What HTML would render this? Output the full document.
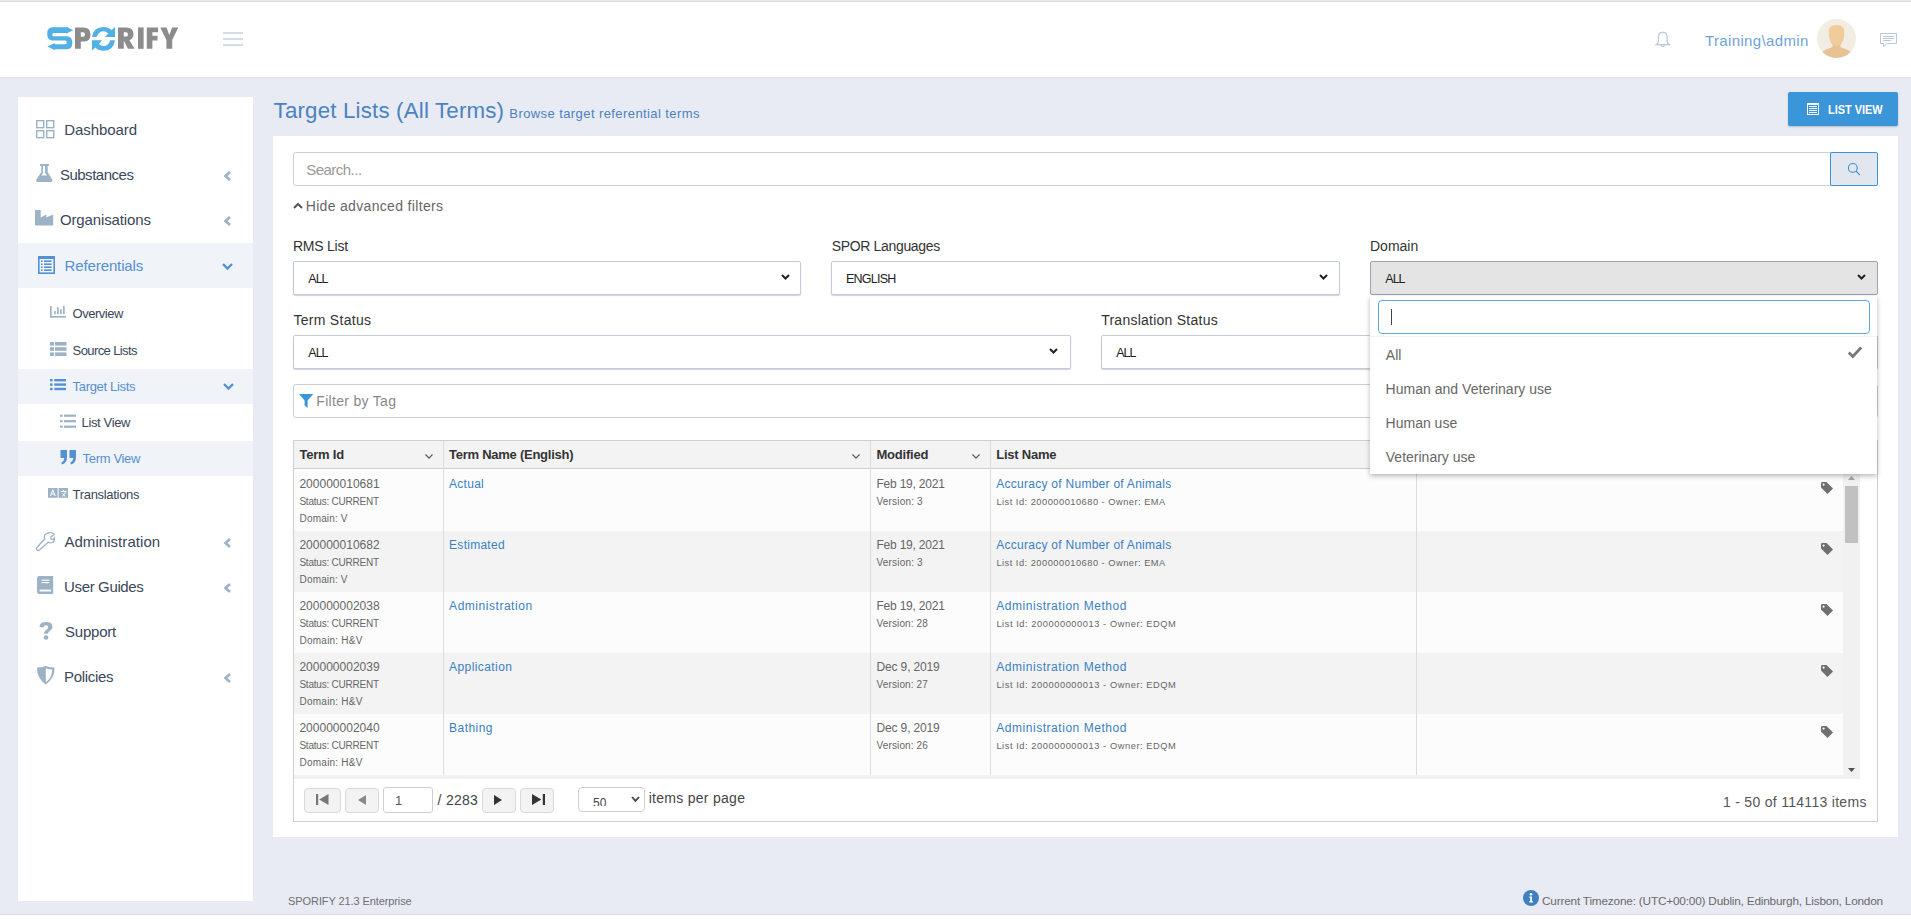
<!DOCTYPE html>
<html><head><meta charset="utf-8">
<style>
*{box-sizing:border-box;margin:0;padding:0}
html,body{width:1911px;height:919px;overflow:hidden}
body{position:relative;background:#e8ebf4;font-family:"Liberation Sans",sans-serif;color:#333}
.a{position:absolute}
.t{position:absolute;line-height:1;white-space:nowrap}
svg{position:absolute;overflow:visible}
.hl{position:absolute;left:18px;width:235px;background:#f0f3f8}
.inp{position:absolute;background:#fff;border:1px solid #cfcfcf;border-radius:3px}
.sel{position:absolute;background:#fff;border:1px solid #c2cbda;border-radius:2px;box-shadow:0 1px 1px rgba(120,130,150,.35)}
</style></head><body>
<div class="a" style="left:0;top:1px;width:1911px;height:1px;background:#d9dadc"></div>
<div class="a" style="left:0;top:2px;width:1911px;height:75px;background:#fff"></div>
<div class="a" style="left:0;top:77px;width:1911px;height:1px;background:#e0e3ec"></div>
<div class="a" style="left:0;top:78px;width:1911px;height:1px;background:#e5e8f1"></div>
<div class="a" style="left:0;top:914px;width:1911px;height:1px;background:#dcdde1"></div>
<div class="a" style="left:0;top:915px;width:1911px;height:4px;background:#fff"></div>
<!-- Logo -->
<svg style="left:0;top:0" width="250" height="77" viewBox="0 0 250 77">
  <g fill="#52b0e4">
    <path d="M52.5 27.3 H66.2 V26.5 L73.1 30.2 L66.2 33.8 V33 H54 Q52.3 33 52.3 34.65 Q52.3 36.3 54 36.3 H67 Q72.3 36.3 72.3 42.8 Q72.3 49.3 67 49.3 H54.8 V50.3 L47.4 46.6 L54.8 43 V44.2 H65.2 Q66.8 44.2 66.8 42.3 Q66.8 40.4 65.2 40.4 H52.5 Q47.2 40.4 47.2 33.85 Q47.2 27.3 52.5 27.3 Z"/>
    <path d="M92 36.9 Q93.5 26.9 103.5 26.9 Q108.5 26.9 111.6 30 L115 26.9 V36.9 H105 L108.2 33.4 Q106 31.2 103.5 31.2 Q98.8 31.2 96.6 36.9 Z"/>
    <path d="M115 40.2 Q113.5 50.8 103.5 50.8 Q98.5 50.8 95.4 47.6 L92 50.6 V40.2 H102.1 L98.9 44 Q101 46.1 103.5 46.1 Q108.2 46.1 110.3 40.2 Z"/>
  </g>
  <g fill="#8c8c8c">
    <path d="M75 27.4 H83.5 Q90.5 27.4 90.5 34.5 Q90.5 41.6 83.5 41.6 H80.8 V48.8 H75 Z M80.8 32.3 V36.8 H83 Q85 36.8 85 34.5 Q85 32.3 83 32.3 Z"/>
    <path d="M118 27.4 H126.5 Q133.5 27.4 133.5 34 Q133.5 38.6 129.5 40.2 L134.5 48.8 H128 L124 41 H123.8 V48.8 H118 Z M123.8 32.2 V36.6 H126 Q128 36.6 128 34.4 Q128 32.2 126 32.2 Z"/>
    <rect x="138" y="27.4" width="5.6" height="21.4"/>
    <path d="M146.8 27.4 H158 V32.3 H152.4 V35.8 H157.5 V40.5 H152.4 V48.8 H146.8 Z"/>
    <path d="M160.3 27.4 H166.5 L169.3 35 L172.1 27.4 H178.3 L172.2 40 V48.8 H166.4 V40 Z"/>
  </g>
  <g fill="#d3dce8">
    <rect x="223" y="32" width="20" height="2"/>
    <rect x="223" y="38" width="20" height="2"/>
    <rect x="223" y="44" width="20" height="2"/>
  </g>
</svg>

<!-- Header right -->
<svg style="left:1650px;top:26px" width="26" height="26" viewBox="0 0 26 26">
  <path d="M12.75 6.3 Q8.4 6.3 8.4 11 V15.3 Q8.4 17 6.2 18.6 H19.3 Q17.1 17 17.1 15.3 V11 Q17.1 6.3 12.75 6.3 Z" fill="none" stroke="#b7c9de" stroke-width="1.3"/>
  <path d="M10.9 19 Q12.75 22.3 14.6 19" fill="none" stroke="#b7c9de" stroke-width="1.2"/>
</svg>
<svg style="left:1817px;top:19px" width="39" height="39" viewBox="0 0 39 39">
  <defs><clipPath id="av"><circle cx="19.5" cy="19.5" r="19.5"/></clipPath></defs>
  <circle cx="19.5" cy="19.5" r="19.5" fill="#f3ece3"/>
  <g clip-path="url(#av)">
    <path d="M19.5 6 Q13 6 11.8 11 Q11.3 17 13 22 Q15.3 27 19.5 28 Q23.7 27 26 22 Q27.7 17 27.2 11 Q26 6 19.5 6 Z" fill="#f0cc9c"/>
    <path d="M15.5 25 V28 Q9 30 4 34 V40 H35 V34 Q30 30 23.5 28 V25 Q19.5 29 15.5 25 Z" fill="#e7c394"/>
  </g>
</svg>
<svg style="left:1880px;top:33px" width="17" height="15" viewBox="0 0 17 15">
  <path d="M0.5 0.5 H16.5 V10.5 H6.8 L3.6 13.8 V10.5 H0.5 Z" fill="none" stroke="#b7c9de" stroke-width="1"/>
  <path d="M3 3.5 H14 M3 5.5 H14 M3 7.5 H11" stroke="#b7c9de" stroke-width="1"/>
</svg>

<div class="a" style="left:18px;top:97px;width:235px;height:804px;background:#fff"></div>
<div class="hl" style="top:243px;height:45px"></div>
<div class="hl" style="top:369px;height:35px"></div>
<div class="hl" style="top:441px;height:35px"></div>
<!-- Sidebar icons -->
<svg style="left:36px;top:120px" width="19" height="19" viewBox="0 0 19 19"><g fill="none" stroke="#9cb2c6" stroke-width="1.4"><rect x="0.7" y="0.7" width="7" height="7"/><rect x="10.7" y="0.7" width="7" height="7"/><rect x="0.7" y="10.7" width="7" height="7"/><rect x="10.7" y="10.7" width="7" height="7"/></g></svg>
<svg style="left:36px;top:164px" width="17" height="18" viewBox="0 0 17 18"><path fill-rule="evenodd" d="M4.1 0 H12.9 V2 H11.7 V8.3 L16.2 15.6 Q17 18 14.8 18 H1.7 Q-0.5 18 0.3 15.6 L5.3 8.3 V2 H4.1 Z M7 2 V8.9 L5.4 11.4 H11.1 L9.1 8.9 V2 Z" fill="#9cb2c6"/></svg>
<svg style="left:35.3px;top:210.3px" width="19" height="16" viewBox="0 0 19 16"><path d="M0 0 H5.7 V7.4 L11.4 4.6 V7.4 L18.2 4.6 V15.5 H0 Z" fill="#9cb2c6"/></svg>
<svg style="left:38px;top:256px" width="17" height="18" viewBox="0 0 17 18"><g fill="#5590d2"><rect x="0" y="0" width="17" height="3"/><rect x="0" y="0" width="1.6" height="18"/><rect x="15.4" y="0" width="1.6" height="18"/><rect x="0" y="16.4" width="17" height="1.6"/><rect x="3" y="4.4" width="1.6" height="1.6"/><rect x="6" y="4.4" width="7.6" height="1.6"/><rect x="3" y="7.4" width="1.6" height="1.6"/><rect x="6" y="7.4" width="7.6" height="1.6"/><rect x="3" y="10.4" width="1.6" height="1.6"/><rect x="6" y="10.4" width="7.6" height="1.6"/><rect x="3" y="13.4" width="1.6" height="1.6"/><rect x="6" y="13.4" width="7.6" height="1.6"/></g></svg>
<svg style="left:223px;top:171px" width="9" height="10" viewBox="0 0 9 10"><path d="M7 1 L2.5 5 L7 9" fill="none" stroke="#9cb2c6" stroke-width="2.6"/></svg>
<svg style="left:223px;top:216px" width="9" height="10" viewBox="0 0 9 10"><path d="M7 1 L2.5 5 L7 9" fill="none" stroke="#9cb2c6" stroke-width="2.6"/></svg>
<svg style="left:223px;top:538px" width="9" height="10" viewBox="0 0 9 10"><path d="M7 1 L2.5 5 L7 9" fill="none" stroke="#9cb2c6" stroke-width="2.6"/></svg>
<svg style="left:223px;top:583px" width="9" height="10" viewBox="0 0 9 10"><path d="M7 1 L2.5 5 L7 9" fill="none" stroke="#9cb2c6" stroke-width="2.6"/></svg>
<svg style="left:223px;top:673px" width="9" height="10" viewBox="0 0 9 10"><path d="M7 1 L2.5 5 L7 9" fill="none" stroke="#9cb2c6" stroke-width="2.6"/></svg>
<svg style="left:221.5px;top:263px" width="11" height="7" viewBox="0 0 11 7"><path d="M1 1 L5.5 5.5 L10 1" fill="none" stroke="#5590d2" stroke-width="2.4"/></svg>
<svg style="left:222.5px;top:383px" width="11" height="7" viewBox="0 0 11 7"><path d="M1 1 L5.5 5.5 L10 1" fill="none" stroke="#5590d2" stroke-width="2.4"/></svg>
<svg style="left:50px;top:306px" width="17" height="12" viewBox="0 0 17 12"><g fill="#9cb2c6"><rect x="0" y="0" width="1.7" height="11.6"/><rect x="0" y="10" width="16" height="1.6"/><rect x="4" y="5" width="1.7" height="3.2"/><rect x="7" y="1.3" width="1.7" height="6.9"/><rect x="10" y="3.2" width="1.7" height="5"/><rect x="13" y="0" width="1.7" height="8.2"/></g></svg>
<svg style="left:49.5px;top:342px" width="17" height="15" viewBox="0 0 17 15"><g fill="#9cb2c6"><rect x="0" y="0" width="4" height="3.6"/><rect x="5" y="0" width="11.5" height="3.6"/><rect x="0" y="5.2" width="4" height="3.6"/><rect x="5" y="5.2" width="11.5" height="3.6"/><rect x="0" y="10.4" width="4" height="3.6"/><rect x="5" y="10.4" width="11.5" height="3.6"/></g></svg>
<svg style="left:50px;top:379px" width="17" height="12" viewBox="0 0 17 12"><g fill="#5590d2"><rect x="0" y="0" width="2.6" height="2.4"/><rect x="4.3" y="0" width="11.7" height="2.4"/><rect x="0" y="4.4" width="2.6" height="2.4"/><rect x="4.3" y="4.4" width="11.7" height="2.4"/><rect x="0" y="8.8" width="2.6" height="2.4"/><rect x="4.3" y="8.8" width="11.7" height="2.4"/></g></svg>
<svg style="left:60px;top:414px" width="17" height="15" viewBox="0 0 17 15"><g fill="#9cb2c6"><rect x="0" y="0.6" width="2.6" height="2.2"/><rect x="4" y="0.6" width="12" height="2.2"/><rect x="0" y="6.1" width="2.6" height="2.2"/><rect x="4" y="6.1" width="12" height="2.2"/><rect x="0" y="11.6" width="2.6" height="2.2"/><rect x="4" y="11.6" width="12" height="2.2"/></g></svg>
<svg style="left:60px;top:450px" width="17" height="15" viewBox="0 0 17 15"><g fill="#5590d2"><path d="M0.5 0 H7 V7 Q7 13 2 14.5 L1.2 12.5 Q4 11.5 4.2 8 H0.5 Z"/><path d="M9.5 0 H16 V7 Q16 13 11 14.5 L10.2 12.5 Q13 11.5 13.2 8 H9.5 Z"/></g></svg>
<svg style="left:48px;top:488px" width="21" height="11" viewBox="0 0 21 11"><rect x="0" y="0" width="9.6" height="9.8" fill="#9cb2c6"/><rect x="10.6" y="0" width="9.4" height="9.8" fill="#9cb2c6"/><path d="M2.4 8 L4.8 1.8 L7.2 8 M3.4 6 H6.2" fill="none" stroke="#fff" stroke-width="1"/><path d="M12.6 3.4 H18.6 M15.4 2 V3.4 M18 3.4 Q16.5 7 14 8.4 M14.5 5.2 L17 8.4" fill="none" stroke="#fff" stroke-width="1"/></svg>
<svg style="left:36px;top:532px" width="19" height="19" viewBox="0 0 19 19"><path d="M12.5 0.8 Q16 0.3 18.3 2.2 L14.8 5 L15.2 7.2 L17.3 7.6 L18.3 5.8 Q19 9.5 16 10.5 Q13.8 11.3 12.2 10.3 L3.5 18 Q2 19 0.9 17.8 Q-0.2 16.6 1 15.3 L8.8 6.8 Q7.8 5 8.6 3.2 Q9.8 1.2 12.5 0.8 Z" fill="none" stroke="#9cb2c6" stroke-width="1.3"/></svg>
<svg style="left:37.4px;top:576px" width="17" height="19" viewBox="0 0 17 19"><path d="M2.2 0 H16.2 V18 H2.2 Q0 18 0 15.8 V2.2 Q0 0 2.2 0 Z" fill="#9cb2c6"/><g fill="#fff"><rect x="4.6" y="3.6" width="7.6" height="1.2"/><rect x="4.6" y="6" width="7.6" height="1.2"/><rect x="2.6" y="13.6" width="11.4" height="1.9"/></g></svg>
<svg style="left:38.5px;top:621.5px" width="14" height="18" viewBox="0 0 14 18"><path d="M0.5 5 Q0.5 0 7 0 Q13.5 0 13.5 5 Q13.5 7.5 10.8 9 Q9 10 9 11.8 H5 Q5 9 7 8 Q9.2 6.8 9.2 5.2 Q9.2 3.3 7 3.3 Q4.8 3.3 4.5 5.5 Z" fill="#9cb2c6"/><circle cx="7" cy="15.5" r="2.3" fill="#9cb2c6"/></svg>
<svg style="left:36.8px;top:666px" width="18" height="19" viewBox="0 0 18 19"><path d="M8.8 0 Q13 1.5 17.5 1.5 Q18 12 8.8 18.5 Q-0.4 12 0 1.5 Q4.5 1.5 8.8 0 Z" fill="#9cb2c6"/><path d="M8.8 2.3 Q12 3.5 15.2 3.5 Q15.3 11.8 8.8 16 Z" fill="#fff"/></svg>

<div class="a" style="left:273px;top:136px;width:1625px;height:701px;background:#fff"></div>
<div class="a" style="left:1788px;top:92px;width:110px;height:34px;background:#3a95d9;border-radius:2px;box-shadow:0 1px 2px rgba(0,0,0,.2)"></div>
<div class="inp" style="left:293px;top:152px;width:1539px;height:34px;border-radius:3px 0 0 3px"></div>
<div class="a" style="left:1830px;top:152px;width:48px;height:34px;background:#e2e6ee;border:1px solid #3a95d9;border-radius:2px"></div>
<div class="sel" style="left:293px;top:261px;width:508px;height:34px"></div>
<div class="sel" style="left:831px;top:261px;width:509px;height:34px"></div>
<div class="a" style="left:1370px;top:261px;width:508px;height:34px;background:#e4e4e4;border:1px solid #97a2b6;border-radius:2px"></div>
<div class="sel" style="left:293px;top:335px;width:778px;height:34px"></div>
<div class="sel" style="left:1101px;top:335px;width:777px;height:34px"></div>
<div class="inp" style="left:293px;top:384px;width:1585px;height:34px"></div>
<svg style="left:1807px;top:103px" width="12" height="12" viewBox="0 0 12 12"><g fill="#fff"><rect x="0" y="0" width="12" height="2"/><rect x="0" y="0" width="1" height="12"/><rect x="11" y="0" width="1" height="12"/><rect x="0" y="11" width="12" height="1"/><rect x="2" y="3" width="8" height="1"/><rect x="2" y="5" width="8" height="1"/><rect x="2" y="7" width="8" height="1"/><rect x="2" y="9" width="8" height="1"/></g></svg>

<svg style="left:1847px;top:162px" width="14" height="14" viewBox="0 0 14 14"><circle cx="5.8" cy="5.9" r="4.4" fill="none" stroke="#3a90d8" stroke-width="1.1"/><path d="M8.9 9.1 L12.8 12.9" stroke="#3a90d8" stroke-width="1.2"/></svg>

<svg style="left:293px;top:202px" width="10" height="7" viewBox="0 0 10 7"><path d="M1 6 L5 2 L9 6" fill="none" stroke="#555" stroke-width="2"/></svg>
<svg style="left:780.5px;top:274px" width="9" height="6" viewBox="0 0 9 6"><path d="M1 1 L4.5 4.5 L8 1" fill="none" stroke="#222" stroke-width="2"/></svg>
<svg style="left:1318.5px;top:274px" width="9" height="6" viewBox="0 0 9 6"><path d="M1 1 L4.5 4.5 L8 1" fill="none" stroke="#222" stroke-width="2"/></svg>
<svg style="left:1857px;top:274px" width="9" height="6" viewBox="0 0 9 6"><path d="M1 1 L4.5 4.5 L8 1" fill="none" stroke="#222" stroke-width="2"/></svg>
<svg style="left:1049px;top:348px" width="9" height="6" viewBox="0 0 9 6"><path d="M1 1 L4.5 4.5 L8 1" fill="none" stroke="#222" stroke-width="2"/></svg>
<svg style="left:299px;top:394px" width="15" height="14" viewBox="0 0 15 14"><path d="M0 0 H14.2 L8.6 6.5 V14 L5.6 11.5 V6.5 Z" fill="#3a95d9"/></svg>

<div class="a" style="left:293px;top:440px;width:1585px;height:382px;border:1px solid #cfcfcf;background:#fff"></div>
<div class="a" style="left:294px;top:441px;width:1583px;height:28px;background:#f3f3f3;border-bottom:1px solid #cfcfcf"></div>
<div class="a" style="left:443px;top:441px;width:1px;height:28px;background:#dcdcdc"></div>
<div class="a" style="left:870px;top:441px;width:1px;height:28px;background:#dcdcdc"></div>
<div class="a" style="left:990px;top:441px;width:1px;height:28px;background:#dcdcdc"></div>
<div class="a" style="left:1416px;top:441px;width:1px;height:28px;background:#dcdcdc"></div>
<div class="a" style="left:294px;top:469px;width:1566px;height:310px;background:#f1f1f1"></div>
<div class="a" style="left:294px;top:469px;width:1549px;height:62px;background:#fcfcfc"></div>
<svg style="left:1821px;top:482px" width="12" height="12" viewBox="0 0 12 12"><path d="M0 1.2 Q0 0 1.2 0 H5.5 L12 6.5 L6.5 12 L0 5.5 Z" fill="#6f6f6f"/><circle cx="2.6" cy="2.6" r="1.1" fill="#fff"/></svg>
<div class="a" style="left:294px;top:531px;width:1549px;height:61px;background:#f3f3f3"></div>
<svg style="left:1821px;top:543px" width="12" height="12" viewBox="0 0 12 12"><path d="M0 1.2 Q0 0 1.2 0 H5.5 L12 6.5 L6.5 12 L0 5.5 Z" fill="#6f6f6f"/><circle cx="2.6" cy="2.6" r="1.1" fill="#fff"/></svg>
<div class="a" style="left:294px;top:592px;width:1549px;height:61px;background:#fcfcfc"></div>
<svg style="left:1821px;top:604px" width="12" height="12" viewBox="0 0 12 12"><path d="M0 1.2 Q0 0 1.2 0 H5.5 L12 6.5 L6.5 12 L0 5.5 Z" fill="#6f6f6f"/><circle cx="2.6" cy="2.6" r="1.1" fill="#fff"/></svg>
<div class="a" style="left:294px;top:653px;width:1549px;height:61px;background:#f3f3f3"></div>
<svg style="left:1821px;top:665px" width="12" height="12" viewBox="0 0 12 12"><path d="M0 1.2 Q0 0 1.2 0 H5.5 L12 6.5 L6.5 12 L0 5.5 Z" fill="#6f6f6f"/><circle cx="2.6" cy="2.6" r="1.1" fill="#fff"/></svg>
<div class="a" style="left:294px;top:714px;width:1549px;height:61px;background:#fcfcfc"></div>
<svg style="left:1821px;top:726px" width="12" height="12" viewBox="0 0 12 12"><path d="M0 1.2 Q0 0 1.2 0 H5.5 L12 6.5 L6.5 12 L0 5.5 Z" fill="#6f6f6f"/><circle cx="2.6" cy="2.6" r="1.1" fill="#fff"/></svg>
<div class="a" style="left:443px;top:469px;width:1px;height:306px;background:#dcdcdc"></div>
<div class="a" style="left:870px;top:469px;width:1px;height:306px;background:#dcdcdc"></div>
<div class="a" style="left:990px;top:469px;width:1px;height:306px;background:#dcdcdc"></div>
<div class="a" style="left:1416px;top:469px;width:1px;height:306px;background:#dcdcdc"></div>
<div class="a" style="left:1843px;top:469px;width:17px;height:310px;background:#f1f1f1"></div>
<div class="a" style="left:1845px;top:486px;width:13px;height:57px;background:#c1c1c1"></div>
<svg style="left:1848px;top:476px" width="7" height="4" viewBox="0 0 7 4"><path d="M3.5 0 L7 4 H0 Z" fill="#a3a3a3"/></svg>
<svg style="left:1848px;top:768px" width="7" height="4" viewBox="0 0 7 4"><path d="M0 0 H7 L3.5 4 Z" fill="#505050"/></svg>
<svg style="left:425px;top:453.5px" width="8" height="5" viewBox="0 0 8 5"><path d="M0.5 0.5 L4 4.2 L7.5 0.5" fill="none" stroke="#555" stroke-width="1.1"/></svg>
<svg style="left:852px;top:453.5px" width="8" height="5" viewBox="0 0 8 5"><path d="M0.5 0.5 L4 4.2 L7.5 0.5" fill="none" stroke="#555" stroke-width="1.1"/></svg>
<svg style="left:972px;top:453.5px" width="8" height="5" viewBox="0 0 8 5"><path d="M0.5 0.5 L4 4.2 L7.5 0.5" fill="none" stroke="#555" stroke-width="1.1"/></svg>
<div class="a" style="left:304px;top:788px;width:37px;height:25px;background:#f3f3f3;border:1px solid #d9d9d9;border-radius:4px"></div>
<svg style="left:316px;top:794px" width="13" height="11" viewBox="0 0 13 11"><rect x="0" y="0" width="2.2" height="11" fill="#777"/><path d="M12.5 0 V11 L3.2 5.5 Z" fill="#777"/></svg>
<div class="a" style="left:345px;top:788px;width:34px;height:25px;background:#f3f3f3;border:1px solid #d9d9d9;border-radius:4px"></div>
<svg style="left:358px;top:795px" width="8" height="10" viewBox="0 0 8 10"><path d="M8 0 V10 L0 5 Z" fill="#8a8a8a"/></svg>
<div class="a" style="left:383px;top:787px;width:50px;height:26px;background:#fff;border:1px solid #cfcfcf;border-radius:3px"></div>
<div class="a" style="left:482px;top:788px;width:34px;height:25px;background:#f3f3f3;border:1px solid #d9d9d9;border-radius:4px"></div>
<svg style="left:494px;top:795px" width="8" height="10" viewBox="0 0 8 10"><path d="M0 0 V10 L8 5 Z" fill="#333"/></svg>
<div class="a" style="left:520px;top:788px;width:34px;height:25px;background:#f3f3f3;border:1px solid #d9d9d9;border-radius:4px"></div>
<svg style="left:532px;top:794px" width="13" height="11" viewBox="0 0 13 11"><path d="M0 0 V11 L9.3 5.5 Z" fill="#333"/><rect x="10.8" y="0" width="2.2" height="11" fill="#333"/></svg>
<div class="a" style="left:578px;top:787px;width:67px;height:25px;background:#fff;border:1px solid #cfcfcf;border-radius:4px"></div>
<svg style="left:630.5px;top:796px" width="9" height="6" viewBox="0 0 9 6"><path d="M1 1 L4.5 4.8 L8 1" fill="none" stroke="#444" stroke-width="1.8"/></svg>
<svg style="left:1523px;top:890px" width="16" height="16" viewBox="0 0 16 16"><circle cx="8" cy="8" r="8" fill="#3f80c2"/><circle cx="8" cy="4.3" r="1.3" fill="#fff"/><path d="M6.3 6.6 H9 V11.3 H10 V12.5 H6.2 V11.3 H7.2 V7.8 H6.3 Z" fill="#fff"/></svg>
<div class="t" style="left:1705.00px;top:32.98px;font-size:15px;color:#6fa3d9;letter-spacing:0.360px;">Training\admin</div>
<div class="t" style="left:64.30px;top:121.98px;font-size:15px;color:#3a4759;letter-spacing:-0.080px;">Dashboard</div>
<div class="t" style="left:59.90px;top:166.98px;font-size:15px;color:#3a4759;letter-spacing:-0.487px;">Substances</div>
<div class="t" style="left:59.90px;top:211.98px;font-size:15px;color:#3a4759;letter-spacing:-0.129px;">Organisations</div>
<div class="t" style="left:64.60px;top:257.98px;font-size:15px;color:#5590d2;letter-spacing:-0.122px;">Referentials</div>
<div class="t" style="left:72.60px;top:307.02px;font-size:13px;color:#3a4759;letter-spacing:-0.484px;">Overview</div>
<div class="t" style="left:72.60px;top:344.02px;font-size:13px;color:#3a4759;letter-spacing:-0.603px;">Source Lists</div>
<div class="t" style="left:72.60px;top:380.02px;font-size:13px;color:#5590d2;letter-spacing:-0.325px;">Target Lists</div>
<div class="t" style="left:81.60px;top:416.02px;font-size:13px;color:#3a4759;letter-spacing:-0.374px;">List View</div>
<div class="t" style="left:82.60px;top:452.02px;font-size:13px;color:#5590d2;letter-spacing:-0.332px;">Term View</div>
<div class="t" style="left:72.60px;top:488.02px;font-size:13px;color:#3a4759;letter-spacing:-0.311px;">Translations</div>
<div class="t" style="left:64.40px;top:533.98px;font-size:15px;color:#3a4759;letter-spacing:0.054px;">Administration</div>
<div class="t" style="left:64.10px;top:578.98px;font-size:15px;color:#3a4759;letter-spacing:-0.366px;">User Guides</div>
<div class="t" style="left:65.10px;top:623.98px;font-size:15px;color:#3a4759;letter-spacing:-0.245px;">Support</div>
<div class="t" style="left:64.10px;top:668.98px;font-size:15px;color:#3a4759;letter-spacing:-0.327px;">Policies</div>
<div class="t" style="left:273.60px;top:99.82px;font-size:22.3px;color:#4b82c0;letter-spacing:0.178px;">Target Lists (All Terms)</div>
<div class="t" style="left:509.30px;top:107.02px;font-size:13px;color:#4b82c0;letter-spacing:0.416px;">Browse target referential terms</div>
<div class="t" style="left:1827.70px;top:103.02px;font-size:13px;color:#ffffff;font-weight:700;transform:scaleX(0.8413);transform-origin:0 0;">LIST VIEW</div>
<div class="t" style="left:306.20px;top:161.98px;font-size:15px;color:#999999;letter-spacing:-0.520px;">Search...</div>
<div class="t" style="left:305.70px;top:199.02px;font-size:14px;color:#666666;letter-spacing:0.328px;">Hide advanced filters</div>
<div class="t" style="left:293.00px;top:239.02px;font-size:14px;color:#333333;letter-spacing:-0.242px;">RMS List</div>
<div class="t" style="left:831.70px;top:239.02px;font-size:14px;color:#333333;letter-spacing:-0.335px;">SPOR Languages</div>
<div class="t" style="left:1370.00px;top:239.02px;font-size:14px;color:#333333;">Domain</div>
<div class="t" style="left:308.30px;top:272.97px;font-size:12.5px;color:#222222;letter-spacing:-0.995px;">ALL</div>
<div class="t" style="left:846.00px;top:272.97px;font-size:12.5px;color:#222222;letter-spacing:-0.775px;">ENGLISH</div>
<div class="t" style="left:1385.30px;top:272.97px;font-size:12.5px;color:#222222;letter-spacing:-0.995px;">ALL</div>
<div class="t" style="left:293.40px;top:313.02px;font-size:14px;color:#333333;letter-spacing:0.291px;">Term Status</div>
<div class="t" style="left:1101.20px;top:313.02px;font-size:14px;color:#333333;letter-spacing:0.246px;">Translation Status</div>
<div class="t" style="left:308.30px;top:346.97px;font-size:12.5px;color:#222222;letter-spacing:-0.995px;">ALL</div>
<div class="t" style="left:1116.20px;top:346.97px;font-size:12.5px;color:#222222;letter-spacing:-0.995px;">ALL</div>
<div class="t" style="left:316.30px;top:394.02px;font-size:14px;color:#888888;letter-spacing:0.303px;">Filter by Tag</div>
<div class="t" style="left:299.40px;top:448.02px;font-size:13px;color:#333333;font-weight:700;letter-spacing:-0.208px;">Term Id</div>
<div class="t" style="left:449.00px;top:448.02px;font-size:13px;color:#333333;font-weight:700;letter-spacing:-0.252px;">Term Name (English)</div>
<div class="t" style="left:876.40px;top:448.02px;font-size:13px;color:#333333;font-weight:700;letter-spacing:-0.199px;">Modified</div>
<div class="t" style="left:996.30px;top:448.02px;font-size:13px;color:#333333;font-weight:700;letter-spacing:-0.238px;">List Name</div>
<div class="t" style="left:299.40px;top:478.02px;font-size:12px;color:#666666;letter-spacing:0.017px;">200000010681</div>
<div class="t" style="left:299.40px;top:497.01px;font-size:10px;color:#666666;letter-spacing:-0.220px;">Status: CURRENT</div>
<div class="t" style="left:299.60px;top:514.01px;font-size:10px;color:#666666;letter-spacing:0.148px;">Domain: V</div>
<div class="t" style="left:449.10px;top:478.02px;font-size:12px;color:#3a7fc4;letter-spacing:0.263px;">Actual</div>
<div class="t" style="left:876.50px;top:478.02px;font-size:12px;color:#666666;letter-spacing:-0.214px;">Feb 19, 2021</div>
<div class="t" style="left:876.50px;top:497.01px;font-size:10px;color:#666666;letter-spacing:0.188px;">Version: 3</div>
<div class="t" style="left:996.30px;top:478.02px;font-size:12px;color:#3a7fc4;letter-spacing:0.266px;">Accuracy of Number of Animals</div>
<div class="t" style="left:996.40px;top:497.83px;font-size:9.3px;color:#666666;letter-spacing:0.483px;">List Id: 200000010680 - Owner: EMA</div>
<div class="t" style="left:299.40px;top:539.02px;font-size:12px;color:#666666;letter-spacing:0.017px;">200000010682</div>
<div class="t" style="left:299.40px;top:558.01px;font-size:10px;color:#666666;letter-spacing:-0.220px;">Status: CURRENT</div>
<div class="t" style="left:299.60px;top:575.01px;font-size:10px;color:#666666;letter-spacing:0.148px;">Domain: V</div>
<div class="t" style="left:449.10px;top:539.02px;font-size:12px;color:#3a7fc4;letter-spacing:0.265px;">Estimated</div>
<div class="t" style="left:876.50px;top:539.02px;font-size:12px;color:#666666;letter-spacing:-0.214px;">Feb 19, 2021</div>
<div class="t" style="left:876.50px;top:558.01px;font-size:10px;color:#666666;letter-spacing:0.188px;">Version: 3</div>
<div class="t" style="left:996.30px;top:539.02px;font-size:12px;color:#3a7fc4;letter-spacing:0.266px;">Accuracy of Number of Animals</div>
<div class="t" style="left:996.40px;top:558.83px;font-size:9.3px;color:#666666;letter-spacing:0.483px;">List Id: 200000010680 - Owner: EMA</div>
<div class="t" style="left:299.40px;top:600.02px;font-size:12px;color:#666666;letter-spacing:0.017px;">200000002038</div>
<div class="t" style="left:299.40px;top:619.01px;font-size:10px;color:#666666;letter-spacing:-0.220px;">Status: CURRENT</div>
<div class="t" style="left:299.60px;top:636.01px;font-size:10px;color:#666666;letter-spacing:0.219px;">Domain: H&amp;V</div>
<div class="t" style="left:449.10px;top:600.02px;font-size:12px;color:#3a7fc4;letter-spacing:0.534px;">Administration</div>
<div class="t" style="left:876.50px;top:600.02px;font-size:12px;color:#666666;letter-spacing:-0.214px;">Feb 19, 2021</div>
<div class="t" style="left:876.50px;top:619.01px;font-size:10px;color:#666666;letter-spacing:0.133px;">Version: 28</div>
<div class="t" style="left:996.30px;top:600.02px;font-size:12px;color:#3a7fc4;letter-spacing:0.534px;">Administration Method</div>
<div class="t" style="left:996.40px;top:619.83px;font-size:9.3px;color:#666666;letter-spacing:0.551px;">List Id: 200000000013 - Owner: EDQM</div>
<div class="t" style="left:299.40px;top:661.02px;font-size:12px;color:#666666;letter-spacing:0.017px;">200000002039</div>
<div class="t" style="left:299.40px;top:680.01px;font-size:10px;color:#666666;letter-spacing:-0.220px;">Status: CURRENT</div>
<div class="t" style="left:299.60px;top:697.01px;font-size:10px;color:#666666;letter-spacing:0.219px;">Domain: H&amp;V</div>
<div class="t" style="left:449.10px;top:661.02px;font-size:12px;color:#3a7fc4;letter-spacing:0.417px;">Application</div>
<div class="t" style="left:876.50px;top:661.02px;font-size:12px;color:#666666;letter-spacing:-0.144px;">Dec 9, 2019</div>
<div class="t" style="left:876.50px;top:680.01px;font-size:10px;color:#666666;letter-spacing:0.133px;">Version: 27</div>
<div class="t" style="left:996.30px;top:661.02px;font-size:12px;color:#3a7fc4;letter-spacing:0.534px;">Administration Method</div>
<div class="t" style="left:996.40px;top:680.83px;font-size:9.3px;color:#666666;letter-spacing:0.551px;">List Id: 200000000013 - Owner: EDQM</div>
<div class="t" style="left:299.40px;top:722.02px;font-size:12px;color:#666666;letter-spacing:0.017px;">200000002040</div>
<div class="t" style="left:299.40px;top:741.01px;font-size:10px;color:#666666;letter-spacing:-0.220px;">Status: CURRENT</div>
<div class="t" style="left:299.60px;top:758.01px;font-size:10px;color:#666666;letter-spacing:0.219px;">Domain: H&amp;V</div>
<div class="t" style="left:449.10px;top:722.02px;font-size:12px;color:#3a7fc4;letter-spacing:0.446px;">Bathing</div>
<div class="t" style="left:876.50px;top:722.02px;font-size:12px;color:#666666;letter-spacing:-0.144px;">Dec 9, 2019</div>
<div class="t" style="left:876.50px;top:741.01px;font-size:10px;color:#666666;letter-spacing:0.133px;">Version: 26</div>
<div class="t" style="left:996.30px;top:722.02px;font-size:12px;color:#3a7fc4;letter-spacing:0.534px;">Administration Method</div>
<div class="t" style="left:996.40px;top:741.83px;font-size:9.3px;color:#666666;letter-spacing:0.551px;">List Id: 200000000013 - Owner: EDQM</div>
<div class="t" style="left:395.00px;top:794.02px;font-size:13px;color:#555555;">1</div>
<div class="t" style="left:437.60px;top:793.02px;font-size:14px;color:#444444;letter-spacing:0.252px;">/ 2283</div>
<div class="t" style="left:593.00px;top:797.02px;font-size:12px;color:#444444;">50</div>
<div class="t" style="left:648.70px;top:791.02px;font-size:14px;color:#444444;letter-spacing:0.283px;">items per page</div>
<div class="t" style="left:1722.90px;top:795.02px;font-size:14px;color:#555555;letter-spacing:0.299px;">1 - 50 of 114113 items</div>
<div class="t" style="left:288.10px;top:896.01px;font-size:11px;color:#707070;letter-spacing:-0.097px;">SPORIFY 21.3 Enterprise</div>
<div class="t" style="left:1542.00px;top:895.76px;font-size:11.8px;color:#6a6a6a;letter-spacing:-0.193px;">Current Timezone: (UTC+00:00) Dublin, Edinburgh, Lisbon, London</div>
<div class="a" style="left:586px;top:806px;width:30px;height:4px;background:#fff"></div>
<div class="a" style="left:1370px;top:296px;width:507px;height:178px;background:#fff;box-shadow:0 2px 5px rgba(0,0,0,.28)"></div>
<div class="a" style="left:1370px;top:336px;width:507px;height:1px;background:#f2f2f2"></div>
<div class="a" style="left:1378px;top:300px;width:492px;height:34px;background:#fff;border:1px solid #5ea6e6;border-radius:4px"></div>
<div class="a" style="left:1391px;top:309px;width:1px;height:16px;background:#444"></div>
<svg style="left:1848px;top:346px" width="14" height="12" viewBox="0 0 14 12"><path d="M0.8 6.5 L4.8 10.5 L13.2 1.5" fill="none" stroke="#777" stroke-width="2.8"/></svg>
<div class="t" style="left:1385.80px;top:348.02px;font-size:14px;color:#666666;">All</div>
<div class="t" style="left:1385.60px;top:382.02px;font-size:14px;color:#666666;letter-spacing:0.023px;">Human and Veterinary use</div>
<div class="t" style="left:1385.60px;top:416.02px;font-size:14px;color:#666666;">Human use</div>
<div class="t" style="left:1385.80px;top:450.02px;font-size:14px;color:#666666;">Veterinary use</div>
</body></html>
